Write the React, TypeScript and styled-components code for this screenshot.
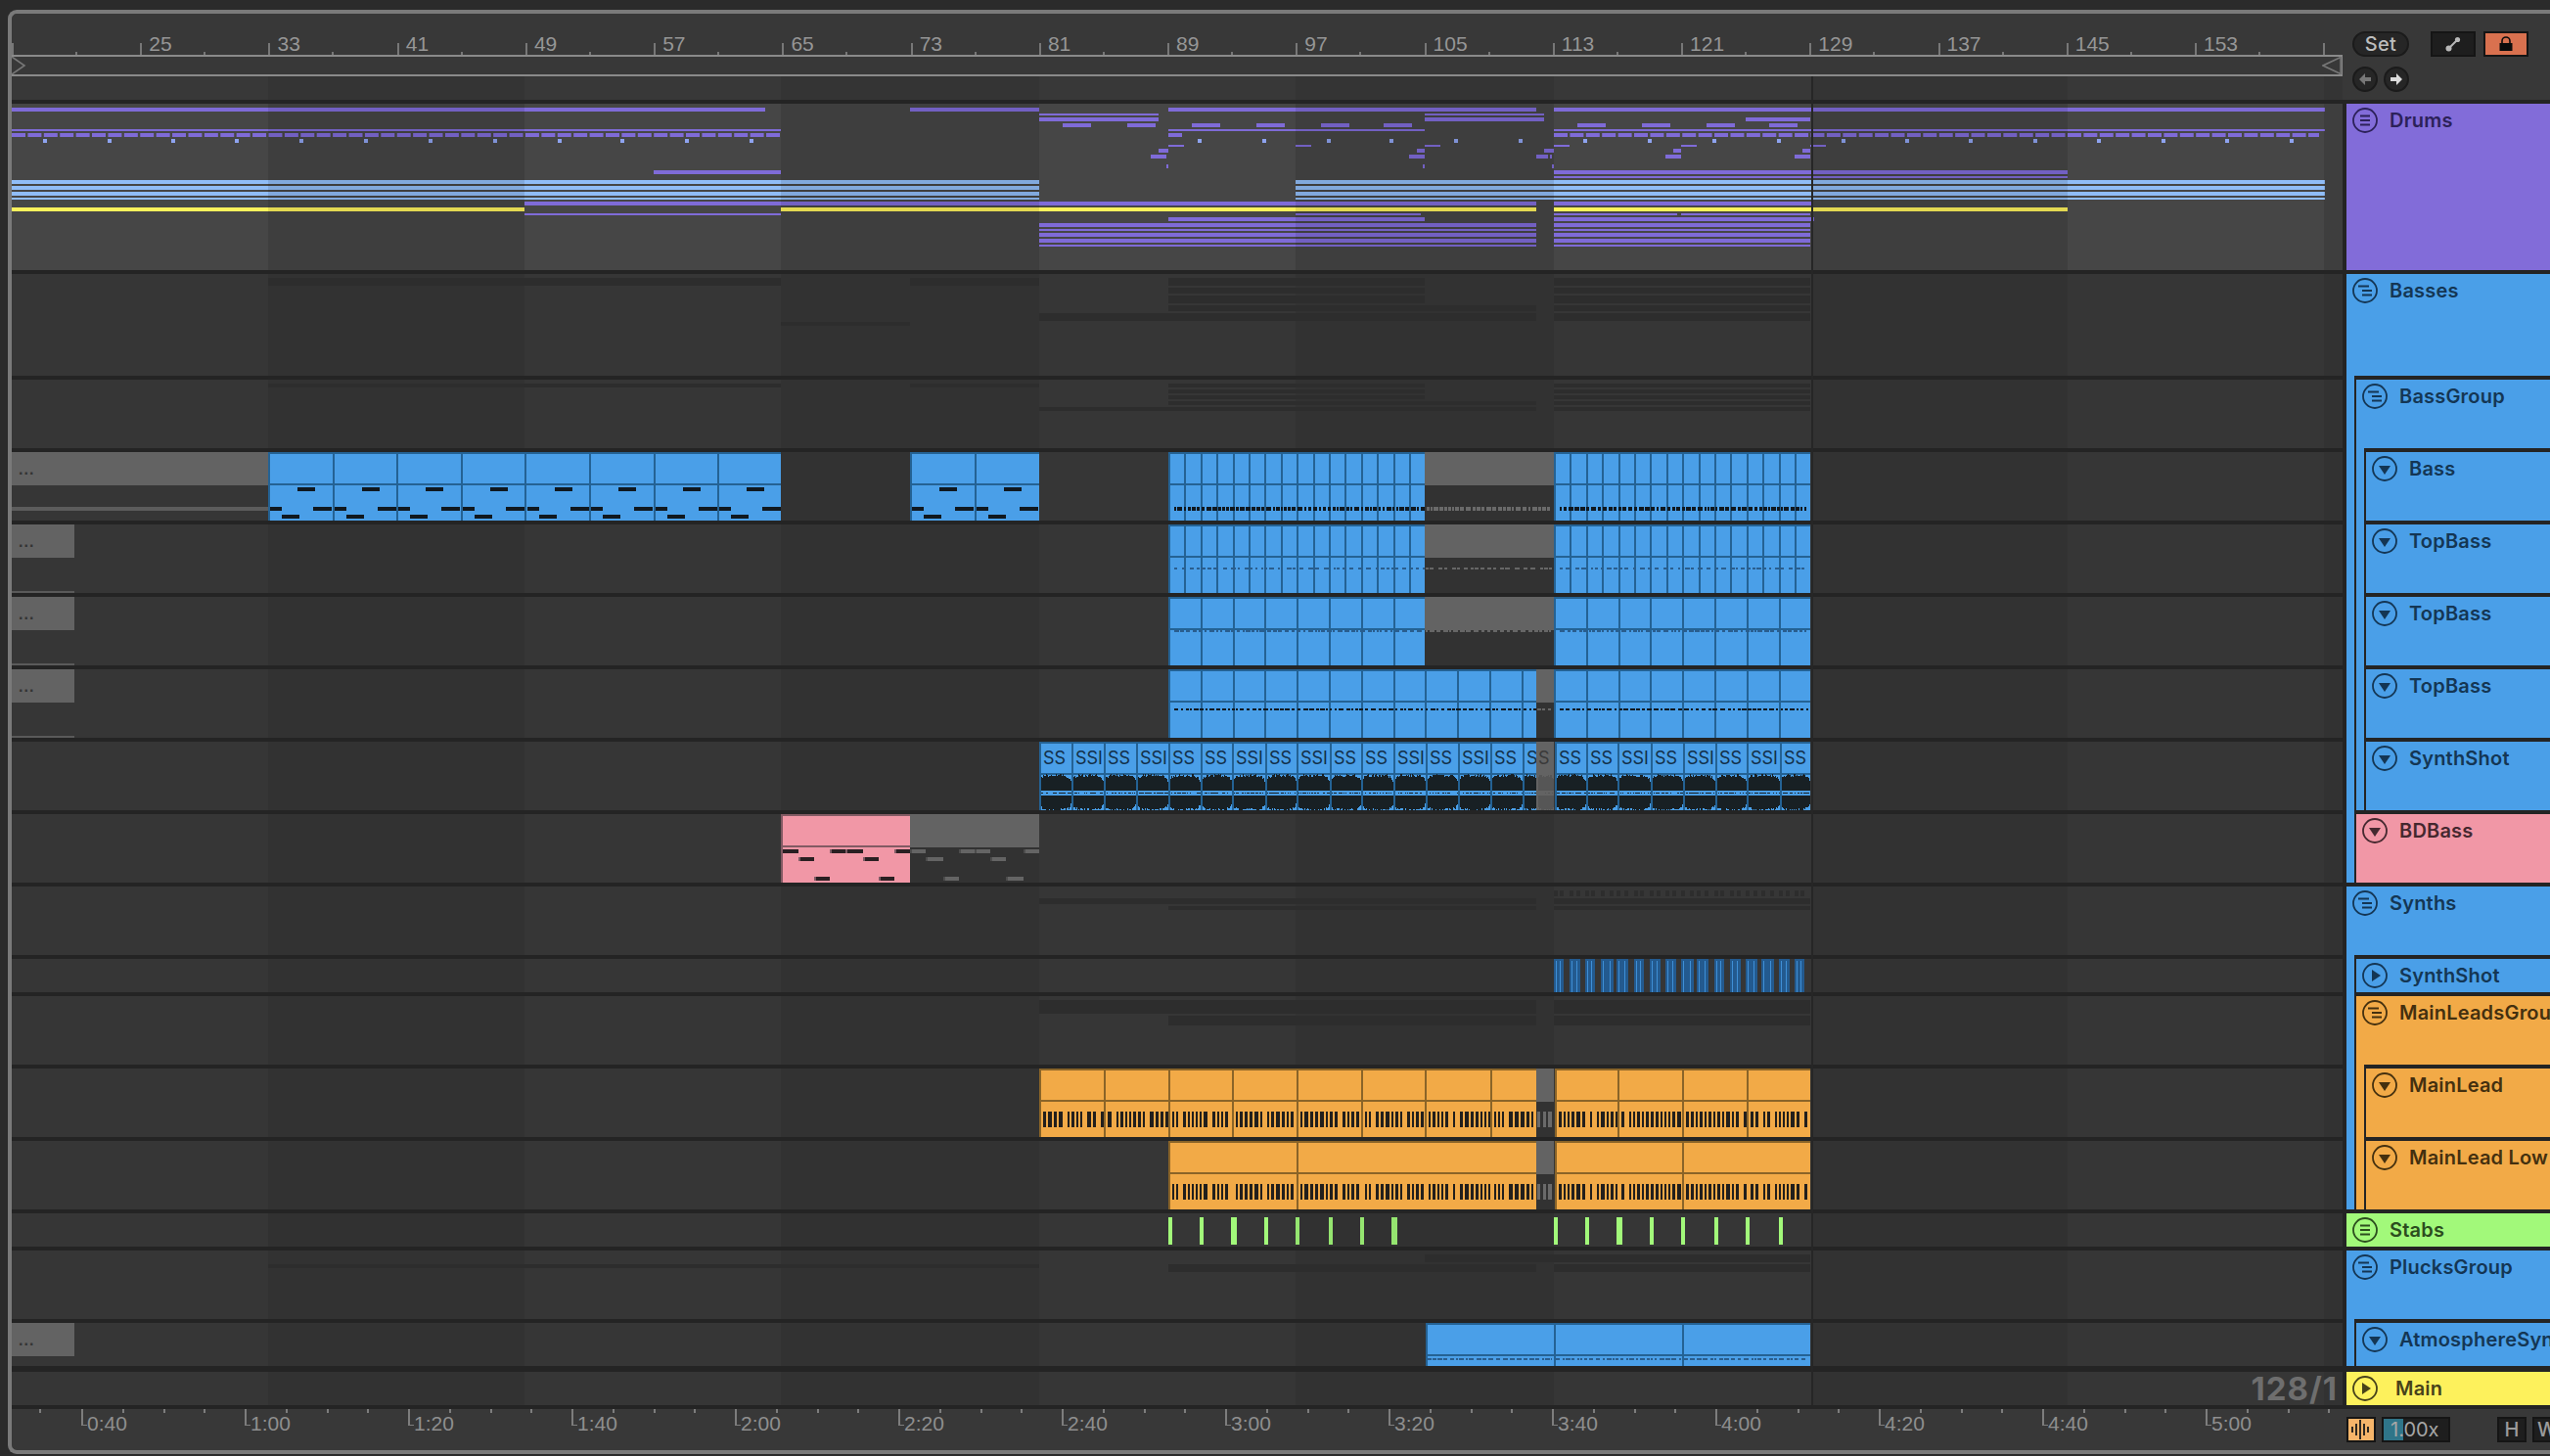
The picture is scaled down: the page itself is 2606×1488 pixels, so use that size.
import React from "react"
import { createGlobalStyle, styled } from "styled-components"

// page x where the lanes begin, and the dark/light 16 bar bands measured from there
const LANE_X = 12
const LANE_W = 2382
const BAND_EDGES = [0, 262, 524, 786, 1050, 1312, 1576, 1839, 2101, 2363, 2382]

const bands = (alpha: number) => {
  const stops: string[] = []
  for (let i = 0; i < BAND_EDGES.length - 1; i++) {
    const c = i % 2 ? `rgba(0,0,0,${alpha})` : "transparent"
    stops.push(`${c} ${BAND_EDGES[i]}px ${BAND_EDGES[i + 1]}px`)
  }
  return `linear-gradient(90deg, ${stops.join(", ")})`
}

const random = (seed: number) => {
  let x = seed * 7919 + 17
  return () => {
    x = (x * 16807) % 2147483647
    return x / 2147483647
  }
}

const span = (from: number, to: number, step: number) => {
  const out: number[] = []
  for (let x = from; x < to - 2; x += step) out.push(Math.round(x))
  out.push(to)
  return out
}

type Bar = [number, number, number, number] // x1, x2, y, height

const PURPLE = "#7f6bd8"
const SKY = "#90bdf7"
const DOT = "#8ea3ef"
const YELLOW = "#fdf15c"
const SHADOW = "#2d2d2d"
const NOTE = "#10181f"
const GREY_NOTE = "#646464"

const TONES = {
  blue: { bg: "#4a9fe8", line: "#246294", ink: "#143654" },
  purple: { bg: "#826cd9", line: "#4f3fa0", ink: "#2c2159" },
  pink: { bg: "#f197a6", line: "#825a63", ink: "#45282f" },
  orange: { bg: "#f2aa47", line: "#8a6428", ink: "#44300f" },
  green: { bg: "#a2f97a", line: "#4a8a3a", ink: "#2c4d1e" },
  yellow: { bg: "#fdf15c", line: "#8a8430", ink: "#47421a" },
} as const

type Tone = keyof typeof TONES

const GlobalStyle = createGlobalStyle`
  html, body {
    margin: 0;
    padding: 0;
    background: #2b2b2b;
    overflow: hidden;
  }
  * { box-sizing: border-box; }
`

const Frame = styled.div`
  margin: 10px 0 0 8px;
  width: 2598px;
  height: 1476px;
  position: relative;
  overflow: hidden;
  background: #383838;
  border: 4px solid #7a7a7a;
  border-right: none;
  border-radius: 9px 0 0 9px;
  font-family: Inter, "Liberation Sans", sans-serif;
`

const TopBar = styled.div`
  display: flex;
  height: 88px;
`

const TopTimeline = styled.div`
  width: ${LANE_W}px;
  display: flex;
  flex-direction: column;
`

const Ruler = styled.div`
  display: flex;
  height: 42px;
  overflow: hidden;
`

const BarCell = styled.div`
  flex: 0 0 131.24px;
  position: relative;
  padding: 19px 0 0 9px;
  color: #969696;
  font: 21px/24px "Liberation Sans", sans-serif;

  &::before {
    content: "";
    position: absolute;
    left: 0;
    bottom: 0;
    width: 2px;
    height: 12px;
    background: #777;
  }
  &::after {
    content: "";
    position: absolute;
    left: 65px;
    bottom: 0;
    width: 2px;
    height: 3px;
    background: #777;
  }
`

const LoopBar = styled.div`
  height: 22px;
  border-top: 2px solid #8a8a8a;
  border-bottom: 2px solid #8a8a8a;
  border-right: 1px solid #8a8a8a;
  display: flex;
  justify-content: space-between;
`

const LoopEnd = styled.svg`
  display: block;
  width: 20px;
  height: 18px;
`

const LoopPad = styled.div`
  flex: 1;
  background: ${bands(0.08)};
`

const Controls = styled.div`
  margin-left: 10px;
  padding-top: 18px;
  display: flex;
  flex-direction: column;
  gap: 10px;
`

const ControlRow = styled.div`
  display: flex;
  gap: 6px;
`

const SetButton = styled.div`
  width: 58px;
  height: 26px;
  margin-right: 16px;
  border-radius: 13px;
  background: #262626;
  border: 2px solid #1b1b1b;
  color: #bdbdbd;
  font-size: 20px;
  font-weight: 500;
  letter-spacing: 0.4px;
  display: flex;
  align-items: center;
  justify-content: center;
`

const SquareButton = styled.div<{ $active?: boolean }>`
  width: 46px;
  height: 26px;
  margin-right: 2px;
  background: ${(p) => (p.$active ? "#d9714f" : "#1e1e1e")};
  border: 2px solid #151515;
  display: flex;
  align-items: center;
  justify-content: center;
`

const RoundButton = styled.div`
  width: 26px;
  height: 26px;
  border-radius: 50%;
  background: #262626;
  border: 2px solid #1b1b1b;
  display: flex;
  align-items: center;
  justify-content: center;
`

const TrackRow = styled.div<{ $h: number; $sep: number }>`
  display: flex;
  height: ${(p) => p.$h + p.$sep}px;
`

// lanes whose art dims its own bands (notes dim with them) get a flat background
const LaneCell = styled.div<{ $sep: number; $group?: boolean; $flat?: boolean }>`
  flex: 0 0 ${LANE_W + 4}px;
  position: relative;
  border-top: ${(p) => p.$sep}px solid #242424;
  border-right: 4px solid #242424;
  background-color: ${(p) => (p.$group ? "#464646" : "#363636")};
  background-image: ${(p) => (p.$flat ? "none" : bands(0.08))};
`

const LaneArt = styled.svg`
  position: absolute;
  left: 0;
  top: 0;
  display: block;
`

const ClipBox = styled.div<{ $tone: Tone | "grey" | "greyFull" }>`
  position: absolute;
  top: 0;
  bottom: 0;
  display: flex;
  overflow: hidden;
  background: ${(p) =>
    p.$tone === "greyFull"
      ? "#636363"
      : p.$tone === "grey"
        ? "transparent"
        : TONES[p.$tone].bg};
  border-top: 2px solid
    ${(p) =>
      p.$tone === "grey" || p.$tone === "greyFull"
        ? "#636363"
        : TONES[p.$tone].line};
  --edge: ${(p) => (p.$tone === "grey" || p.$tone === "greyFull" ? "0" : "2px")};
  --line: ${(p) =>
    p.$tone === "grey" || p.$tone === "greyFull"
      ? "transparent"
      : TONES[p.$tone].line};
  --title: ${(p) => (p.$tone === "grey" ? "#636363" : "transparent")};
`

const Segment = styled.div`
  flex: none;
  height: 100%;
  border-left: var(--edge) solid var(--line);
`

const SegmentTitle = styled.div`
  height: 32px;
  padding-left: 2px;
  border-bottom: 2px solid var(--line);
  background: var(--title);
  overflow: hidden;
  white-space: nowrap;
  color: #12304a;
  font: 18px/30px Inter, sans-serif;
`

const MoreDots = styled.span`
  color: #333;
  font: 700 16px/30px "Liberation Sans", sans-serif;
  letter-spacing: 1px;
  padding-left: 5px;
`

const GreySegmentTitle = styled(SegmentTitle)`
  color: #3a3a3a;
`

const SampleRate = styled.div`
  position: absolute;
  right: 5px;
  top: 0;
  color: #6e6e6e;
  font: 700 33px/34px Inter, sans-serif;
  letter-spacing: 1px;
`

const Head = styled.div`
  flex: 1;
  display: flex;
  min-width: 0;
`

const Indent = styled.div<{ $tone: Tone }>`
  flex: 0 0 10px;
  background: ${(p) => TONES[p.$tone].bg};
  border-right: 2px solid #242424;
`

const HeadBody = styled.div<{ $tone: Tone; $sep: number }>`
  flex: 1;
  min-width: 0;
  display: flex;
  align-items: flex-start;
  gap: 12px;
  padding: 4px 0 0 6px;
  overflow: hidden;
  white-space: nowrap;
  background: ${(p) => TONES[p.$tone].bg};
  border-top: ${(p) => p.$sep}px solid #242424;
  color: ${(p) => TONES[p.$tone].ink};
`

const HeadName = styled.div<{ $shift?: boolean }>`
  padding-left: ${(p) => (p.$shift ? 6 : 0)}px;
  font-size: 20px;
  font-weight: 600;
  line-height: 26px;
  letter-spacing: 0.2px;
`

const SongEnd = styled.div`
  position: absolute;
  left: 1839px;
  top: 64px;
  width: 2px;
  height: 1358px;
  background: #262626;
`

const TimeRow = styled.div`
  display: flex;
  height: 46px;
  border-top: 4px solid #242424;
`

const TimeRuler = styled.div`
  flex: 0 0 ${LANE_W}px;
  display: flex;
  overflow: hidden;
`

const tickImage = "linear-gradient(#7d7d7d, #7d7d7d)"

const TimeCell = styled.div<{ $first?: boolean }>`
  flex: 0 0 ${(p) => (p.$first ? 71 : 167)}px;
  position: relative;
  padding: 3px 0 0 6px;
  color: #8f8f8f;
  font: 21px/24px "Liberation Sans", sans-serif;
  background-image: ${(p) =>
    p.$first ? tickImage : `${tickImage}, ${tickImage}, ${tickImage}`};
  background-repeat: no-repeat;
  background-size: 2px 4px;
  background-position: ${(p) =>
    p.$first ? "28px 0" : "42px 0, 84px 0, 125px 0"};

  &::before {
    content: ${(p) => (p.$first ? "none" : '""')};
    position: absolute;
    left: 0;
    top: 0;
    width: 4px;
    height: 16px;
    border-left: 2px solid #7d7d7d;
    border-bottom: 1px solid #7d7d7d;
  }
`

const TimeTools = styled.div`
  margin-left: 4px;
  padding-top: 8px;
  display: flex;
  align-items: flex-start;
  gap: 6px;
`

const ToolBox = styled.div`
  flex: none;
  height: 26px;
  width: 30px;
  background: #1e1e1e;
  border: 2px solid #151515;
  color: #9b9b9b;
  font-size: 20px;
  font-weight: 500;
  display: flex;
  align-items: center;
  justify-content: center;
  overflow: hidden;
`

const WaveButton = styled(ToolBox)`
  background: #f6b56a;
`

const TempoBox = styled(ToolBox)`
  width: 70px;
  margin-right: 42px;
  justify-content: flex-start;
  padding-left: 7px;
  background: linear-gradient(90deg, #2f7589 20px, #1e1e1e 20px);
  color: #a6a6a6;
  font-weight: 400;
`

function Clip({
  tone,
  edges,
  labels,
  more,
}: {
  tone: Tone | "grey" | "greyFull"
  edges: number[]
  labels?: string[]
  more?: boolean
}) {
  const Title = tone === "grey" || tone === "greyFull" ? GreySegmentTitle : SegmentTitle
  return (
    <ClipBox
      $tone={tone}
      style={{ left: edges[0] - LANE_X, width: edges[edges.length - 1] - edges[0] }}
    >
      {edges.slice(0, -1).map((x, i) => (
        <Segment key={x} style={{ width: edges[i + 1] - x }}>
          <Title>
            {more ? <MoreDots>...</MoreDots> : labels?.[i]}
          </Title>
        </Segment>
      ))}
    </ClipBox>
  )
}

// one svg per lane, drawn in page coordinates
function Art({
  top,
  h,
  dim,
  children,
}: {
  top: number
  h: number
  dim?: number
  children: React.ReactNode
}) {
  return (
    <LaneArt width={LANE_W} height={h} viewBox={`${LANE_X} ${top} ${LANE_W} ${h}`}>
      {children}
      {dim
        ? BAND_EDGES.slice(0, -1).map((x, i) =>
            i % 2 ? (
              <rect
                key={x}
                x={x + LANE_X}
                y={top}
                width={BAND_EDGES[i + 1] - x}
                height={h}
                fill={`rgba(0,0,0,${dim})`}
              />
            ) : null
          )
        : null}
    </LaneArt>
  )
}

function Bars({ color, list }: { color: string; list: Bar[] }) {
  return (
    <path
      fill={color}
      d={list.map(([a, b, y, h]) => `M${a} ${y}H${b}V${y + h}H${a}Z`).join("")}
    />
  )
}

const twin = (y: number, h: number, a1: number, a2: number, b1: number, b2: number): Bar[] => [
  [a1, a2, y, h],
  [b1, b2, y, h],
]

const dashes = (from: number, to: number, y: number, h: number, seed: number, sparse = 0): Bar[] => {
  const r = random(seed)
  const out: Bar[] = []
  let x = from
  while (x < to) {
    const w = 2 + Math.floor(r() * 4)
    out.push([x, Math.min(x + w, to), y, h])
    x += w + 1 + Math.floor(r() * (2 + sparse))
  }
  return out
}

const barcode = (from: number, to: number, y: number, h: number, seed: number): Bar[] => {
  const r = random(seed)
  const out: Bar[] = []
  let x = from + 4
  while (x < to - 1) {
    const w = 2 + Math.floor(r() * 2.4)
    const gap = r() > 0.8 ? 5 : 2
    out.push([x, Math.min(x + w, to), y, h])
    x += w + gap
  }
  return out
}

function Waveform({ from, to, color }: { from: number; to: number; color: string }) {
  const r = random(from)
  const c = 810
  let d = ""
  for (let x = from + 2; x < to; x++) {
    const f = (x - from) / (to - from)
    const env = Math.min(1, Math.pow(Math.sin(Math.PI * Math.min(f * 1.02, 0.99)), 0.16) * 1.08)
    const up = Math.round(env * (14 + r() * 3))
    const down = Math.round(env * (13 + r() * 3))
    d += `M${x} ${c - 2 - up}h1v${up}h-1z`
    d += `M${x} ${c + 3}h1v${down}h-1z`
    if (r() > 0.45) d += `M${x} ${c}h1v1h-1z`
  }
  return <path d={d} fill={color} />
}

const DRUM_DOTS: Bar[] = [
  44, 110, 175, 240, 306, 372, 438, 504, 570, 634, 700, 766, 1224, 1290, 1356, 1420, 1486, 1552,
  1618, 1684, 1750, 1816, 1882, 1947, 2012, 2078, 2143, 2209, 2274, 2340,
].map((x) => [x, x + 4, 142, 4] as Bar)

const barDashes = (from: number, to: number): Bar[] => {
  const out: Bar[] = []
  for (let x = from; x < to - 2; x += 16.405) out.push([x, Math.min(x + 14, to), 136, 4])
  return out
}

function DrumsArt() {
  const blocks = [1086, 1152, 1218, 1284, 1350, 1414, 1612, 1678, 1744, 1808]
  const purple: Bar[] = [
    [12, 782, 110, 4],
    [930, 1062, 110, 4],
    [1194, 1570, 110, 4],
    [1588, 2376, 110, 4],
    ...twin(116, 2, 1062, 1184, 1456, 1578),
    ...twin(120, 4, 1062, 1184, 1456, 1578),
    [1784, 1850, 120, 4],
    ...blocks.map((x) => [x, x + 29, 126, 4] as Bar),
    [12, 798, 132, 2],
    [1194, 1456, 132, 2],
    [1588, 2376, 132, 2],
    ...barDashes(12, 798),
    ...barDashes(1194, 1208),
    ...barDashes(1588, 2370),
    ...[1194, 1324, 1456, 1588, 1718, 1850].map((x) => [x, x + 16, 148, 2] as Bar),
    ...[1184, 1448, 1578, 1710, 1842].map((x) => [x, x + (x === 1184 || x === 1578 ? 10 : 8), 152, 4] as Bar),
    ...[1176, 1440, 1702, 1834].map((x) => [x, x + 16, 158, 4] as Bar),
    [1570, 1582, 158, 4],
    [1584, 1586, 158, 4],
    [1192, 1194, 168, 4],
    [1454, 1456, 168, 4],
    [1586, 1588, 168, 4],
    [668, 798, 174, 4],
    [1588, 2113, 174, 4],
    [1588, 2113, 180, 2],
    [536, 1570, 206, 4],
    [1588, 1851, 206, 4],
    [536, 798, 218, 2],
    [1324, 1452, 218, 2],
    [1588, 1714, 218, 2],
    [1718, 1850, 218, 2],
    ...twin(222, 4, 1194, 1456, 1588, 1854),
    ...twin(228, 4, 1062, 1570, 1588, 1850),
    ...twin(234, 2, 1062, 1570, 1588, 1850),
    ...twin(238, 4, 1062, 1570, 1588, 1850),
    ...twin(244, 4, 1062, 1570, 1588, 1850),
    ...twin(250, 2, 1062, 1570, 1588, 1850),
  ]
  const sky: Bar[] = [184, 190, 196].flatMap((y) => twin(y, 4, 12, 1062, 1324, 2376))
  sky.push(...twin(202, 2, 12, 1062, 1324, 2376))
  const yellow: Bar[] = [
    [12, 536, 212, 4],
    [798, 1570, 212, 4],
    [1588, 2113, 212, 4],
  ]
  return (
    <Art top={106} h={170} dim={0.1}>
      <Bars color={SKY} list={sky} />
      <Bars color={YELLOW} list={yellow} />
      <Bars color={PURPLE} list={purple} />
      <Bars color={DOT} list={DRUM_DOTS} />
    </Art>
  )
}

const shadowTriple = (ys: [number, number][], longFrom: number): Bar[] =>
  ys.flatMap(([y, h], i) => twin(y, h, i === ys.length - 1 ? longFrom : 1194, i >= ys.length - 2 ? 1570 : 1456, 1588, 1850))

function BassesArt() {
  const list: Bar[] = [
    [274, 798, 284, 8],
    [930, 1062, 284, 8],
    [798, 930, 329, 4],
    ...shadowTriple(
      [
        [284, 8],
        [294, 6],
        [302, 8],
        [312, 6],
        [320, 8],
      ],
      1062
    ),
  ]
  return (
    <Art top={280} h={104}>
      <Bars color={SHADOW} list={list} />
    </Art>
  )
}

function BassGroupArt() {
  const list: Bar[] = [
    [274, 798, 392, 4],
    [930, 1062, 392, 4],
    ...shadowTriple(
      [
        [392, 4],
        [398, 4],
        [404, 4],
        [410, 4],
        [416, 4],
      ],
      1062
    ),
  ]
  return (
    <Art top={388} h={70}>
      <Bars color={SHADOW} list={list} />
    </Art>
  )
}

function BassArt() {
  const starts = [274, 340, 405, 471, 537, 602, 668, 733, 930, 996]
  const notes: Bar[] = starts.flatMap((s) => [
    [s + 30, s + 48, 498, 4],
    [s + 2, s + 14, 518, 4],
    [s + 46, s + 65, 518, 4],
    [s + 14, s + 32, 526, 4],
  ] as Bar[])
  return (
    <Art top={462} h={70}>
      <Bars color="#5c5c5c" list={[[12, 274, 518, 4]]} />
      <Bars color={NOTE} list={[...notes, ...dashes(1200, 1456, 518, 4, 3), ...dashes(1594, 1848, 518, 4, 4)]} />
      <Bars color="#6a6a6a" list={dashes(1458, 1586, 518, 4, 5)} />
    </Art>
  )
}

function TopBassArt({
  top,
  y,
  seed,
  noteColor,
  greyEnd,
  sparse,
}: {
  top: number
  y: number
  seed: number
  noteColor: string
  greyEnd: number
  sparse: number
}) {
  return (
    <Art top={top} h={70}>
      <Bars color="#5a5a5a" list={[[12, 76, top + 68, 2]]} />
      <Bars
        color={noteColor}
        list={[...dashes(1200, greyEnd, y, 2, seed, sparse), ...dashes(1594, 1848, y, 2, seed + 1, sparse)]}
      />
      <Bars color="#666" list={dashes(greyEnd + 1, 1586, y, 2, seed + 2, sparse)} />
    </Art>
  )
}

const WAVE_LEFT = [1062, 1095, 1128, 1161, 1194, 1227, 1259, 1293, 1325, 1359, 1391, 1424, 1457, 1490, 1523, 1556, 1570]
const WAVE_RIGHT = [1589, 1621, 1653, 1687, 1720, 1753, 1785, 1819, 1850]

function WaveArt() {
  return (
    <Art top={758} h={70}>
      {WAVE_LEFT.slice(0, -1).map((x, i) => (
        <Waveform key={x} from={x} to={WAVE_LEFT[i + 1]} color="#182024" />
      ))}
      <Waveform from={1570} to={1588} color="#565656" />
      {WAVE_RIGHT.slice(0, -1).map((x, i) => (
        <Waveform key={x} from={x} to={WAVE_RIGHT[i + 1]} color="#182024" />
      ))}
    </Art>
  )
}

function PinkArt() {
  const pink: Bar[] = [
    [800, 816, 868, 4],
    [850, 864, 868, 4],
    [866, 882, 868, 4],
    [916, 930, 868, 4],
    [818, 832, 876, 4],
    [884, 898, 876, 4],
    [834, 848, 896, 4],
    [900, 914, 896, 4],
  ]
  const grey: Bar[] = [
    [932, 946, 868, 4],
    [982, 996, 868, 4],
    [998, 1012, 868, 4],
    [1048, 1062, 868, 4],
    [948, 964, 876, 4],
    [1014, 1028, 876, 4],
    [966, 980, 896, 4],
    [1030, 1046, 896, 4],
  ]
  const shade = (list: Bar[]): Bar[] => list.map(([a, , y, h]) => [a - 2, a, y, h])
  return (
    <Art top={832} h={70}>
      <Bars color="#7e5a64" list={shade(pink.slice(1))} />
      <Bars color="#2a1f22" list={pink} />
      <Bars color="#4c4c4c" list={shade(grey)} />
      <Bars color={GREY_NOTE} list={grey} />
    </Art>
  )
}

const SHOTS = [
  [1588, 1598], [1604, 1615], [1620, 1630], [1636, 1649],
  [1652, 1664], [1670, 1680], [1686, 1697], [1702, 1713],
  [1718, 1731], [1734, 1746], [1752, 1762], [1768, 1779],
  [1784, 1796], [1800, 1813], [1818, 1829], [1834, 1844],
]

function SynthsArt() {
  const list: Bar[] = [
    ...twin(918, 6, 1062, 1570, 1588, 1850),
    ...twin(926, 4, 1194, 1570, 1588, 1850),
    ...SHOTS.flatMap(([a, b]) => [
      [a, a + 4, 910, 6],
      [b - 4, b, 910, 6],
    ] as Bar[]),
  ]
  return (
    <Art top={906} h={70}>
      <Bars color={SHADOW} list={list} />
    </Art>
  )
}

function ShotArt() {
  const dark: Bar[] = SHOTS.map(([a, b]) => [a, b, 980, 34])
  const light: Bar[] = SHOTS.flatMap(([a, b]) => [
    [a + 2, a + 3, 982, 32],
    [b - 4, b - 3, 982, 32],
  ] as Bar[])
  return (
    <Art top={980} h={34}>
      <Bars color="#235a8f" list={dark} />
      <Bars color="#3f8fd6" list={light} />
    </Art>
  )
}

function MainGroupArt() {
  return (
    <Art top={1018} h={70}>
      <Bars
        color={SHADOW}
        list={[...twin(1022, 14, 1062, 1570, 1588, 1850), ...twin(1038, 10, 1194, 1570, 1588, 1850)]}
      />
    </Art>
  )
}

const LEAD_EDGES = [1062, 1128, 1194, 1259, 1325, 1391, 1456, 1523, 1570]
const LEAD_RIGHT = [1589, 1653, 1719, 1785, 1850]

function LeadArt({ y, edges, top }: { y: number; edges: number[]; top: number }) {
  const left = edges.slice(0, -1).flatMap((x, i) => barcode(x, edges[i + 1], y, 16, x))
  const right = LEAD_RIGHT.slice(0, -1).flatMap((x, i) => barcode(x, LEAD_RIGHT[i + 1], y, 16, x + 3))
  return (
    <Art top={top} h={70}>
      <Bars color="#221f1c" list={[...left, ...right]} />
      <Bars color="#6a6a6a" list={[[1571, 1574, y, 16], [1577, 1580, y, 16], [1582, 1586, y, 16]]} />
    </Art>
  )
}

function StabsArt() {
  const list: Bar[] = [
    [1194, 4], [1226, 4], [1258, 6], [1292, 4], [1324, 4], [1358, 4], [1390, 4], [1422, 6],
    [1588, 4], [1620, 4], [1652, 6], [1686, 4], [1718, 4], [1752, 4], [1784, 4], [1818, 4],
  ].map(([x, w]) => [x, x + w, 1244, 28] as Bar)
  return (
    <Art top={1240} h={34} dim={0.08}>
      <Bars color="#a2f97a" list={list} />
    </Art>
  )
}

function PlucksArt() {
  return (
    <Art top={1278} h={70}>
      <Bars
        color={SHADOW}
        list={[
          [1456, 1850, 1282, 8],
          [274, 1062, 1292, 4],
          ...twin(1292, 8, 1194, 1570, 1588, 1850),
        ]}
      />
    </Art>
  )
}

function AtmosphereArt() {
  return (
    <Art top={1352} h={44}>
      <Bars
        color="#2a5e8f"
        list={[
          ...dashes(1459, 1586, 1388, 2, 9, 1),
          ...dashes(1590, 1718, 1388, 2, 10, 1),
          ...dashes(1721, 1848, 1388, 2, 11, 1),
        ]}
      />
    </Art>
  )
}

function TrackIcon({ kind }: { kind: "menu" | "fold" | "down" | "play" }) {
  return (
    <svg width="26" height="26" viewBox="0 0 26 26" style={{ flex: "none", display: "block" }}>
      <circle cx="13" cy="13" r="12" fill="none" stroke="currentColor" strokeWidth="1.8" />
      {kind === "menu" && (
        <path d="M8 8.5h10M8 13h10M8 17.5h10" stroke="currentColor" strokeWidth="2" />
      )}
      {kind === "fold" && (
        <path d="M6 8.5h11M10 13h10M10 17.5h10" stroke="currentColor" strokeWidth="2" />
      )}
      {kind === "down" && <path d="M7 10h12l-6 9z" fill="currentColor" />}
      {kind === "play" && <path d="M10 7v12l9-6z" fill="currentColor" />}
    </svg>
  )
}

const BAR_LABELS = ["", "25", "33", "41", "49", "57", "65", "73", "81", "89", "97", "105", "113", "121", "129", "137", "145", "153", ""]
const TIME_LABELS = ["0:40", "1:00", "1:20", "1:40", "2:00", "2:20", "2:40", "3:00", "3:20", "3:40", "4:00", "4:20", "4:40", "5:00"]

const SS = ["SS", "SSI", "SS", "SSI", "SS", "SS", "SSI", "SS", "SSI", "SS", "SS", "SSI", "SS", "SSI", "SS", "S"]
const SS_RIGHT = ["SS", "SS", "SSI", "SS", "SSI", "SS", "SSI", "SS"]

const oneBar = (a: number, b: number) => span(a, b, 16.405)
const twoBar = (a: number, b: number) => span(a, b, 32.81)

type Row = {
  name: string
  tone: Tone
  indents?: Tone[]
  icon: "menu" | "fold" | "down" | "play"
  top: number
  h: number
  sep?: number
  group?: boolean
  flat?: boolean
  shift?: boolean
  lane?: React.ReactNode
}

const BASS_LEFT_GREY = <Clip tone="grey" more edges={[12, 76]} />

const ROWS: Row[] = [
  { name: "Drums", tone: "purple", icon: "menu", top: 106, h: 170, group: true, flat: true, lane: <DrumsArt /> },
  { name: "Basses", tone: "blue", icon: "fold", top: 280, h: 104, lane: <BassesArt /> },
  { name: "BassGroup", tone: "blue", indents: ["blue"], icon: "fold", top: 388, h: 70, lane: <BassGroupArt /> },
  {
    name: "Bass", tone: "blue", indents: ["blue", "blue"], icon: "down", top: 462, h: 70,
    lane: (
      <>
        <Clip tone="grey" more edges={[12, 274]} />
        <Clip tone="blue" edges={span(274, 798, 65.6)} />
        <Clip tone="blue" edges={span(930, 1062, 65.6)} />
        <Clip tone="blue" edges={oneBar(1194, 1456)} />
        <Clip tone="grey" edges={[1456, 1588]} />
        <Clip tone="blue" edges={oneBar(1588, 1850)} />
        <BassArt />
      </>
    ),
  },
  {
    name: "TopBass", tone: "blue", indents: ["blue", "blue"], icon: "down", top: 536, h: 70,
    lane: (
      <>
        {BASS_LEFT_GREY}
        <Clip tone="blue" edges={oneBar(1194, 1456)} />
        <Clip tone="grey" edges={[1456, 1588]} />
        <Clip tone="blue" edges={oneBar(1588, 1850)} />
        <TopBassArt top={536} y={580} seed={21} noteColor="#2a5e8f" greyEnd={1456} sparse={3} />
      </>
    ),
  },
  {
    name: "TopBass", tone: "blue", indents: ["blue", "blue"], icon: "down", top: 610, h: 70,
    lane: (
      <>
        {BASS_LEFT_GREY}
        <Clip tone="blue" edges={twoBar(1194, 1456)} />
        <Clip tone="grey" edges={[1456, 1588]} />
        <Clip tone="blue" edges={twoBar(1588, 1850)} />
        <TopBassArt top={610} y={644} seed={31} noteColor="#2a5e8f" greyEnd={1456} sparse={1} />
      </>
    ),
  },
  {
    name: "TopBass", tone: "blue", indents: ["blue", "blue"], icon: "down", top: 684, h: 70,
    lane: (
      <>
        {BASS_LEFT_GREY}
        <Clip tone="blue" edges={twoBar(1194, 1570)} />
        <Clip tone="grey" edges={[1570, 1588]} />
        <Clip tone="blue" edges={twoBar(1588, 1850)} />
        <TopBassArt top={684} y={724} seed={41} noteColor={NOTE} greyEnd={1570} sparse={1} />
      </>
    ),
  },
  {
    name: "SynthShot", tone: "blue", indents: ["blue", "blue"], icon: "down", top: 758, h: 70,
    lane: (
      <>
        <Clip tone="blue" edges={WAVE_LEFT} labels={SS} />
        <Clip tone="greyFull" edges={[1570, 1588]} labels={["S"]} />
        <Clip tone="blue" edges={WAVE_RIGHT} labels={SS_RIGHT} />
        <WaveArt />
      </>
    ),
  },
  {
    name: "BDBass", tone: "pink", indents: ["blue"], icon: "down", top: 832, h: 70,
    lane: (
      <>
        <Clip tone="pink" edges={[798, 930]} />
        <Clip tone="grey" edges={[930, 1062]} />
        <PinkArt />
      </>
    ),
  },
  { name: "Synths", tone: "blue", icon: "fold", top: 906, h: 70, lane: <SynthsArt /> },
  { name: "SynthShot", tone: "blue", indents: ["blue"], icon: "play", top: 980, h: 34, lane: <ShotArt /> },
  { name: "MainLeadsGroup", tone: "orange", indents: ["blue"], icon: "fold", top: 1018, h: 70, lane: <MainGroupArt /> },
  {
    name: "MainLead", tone: "orange", indents: ["blue", "orange"], icon: "down", top: 1092, h: 70,
    lane: (
      <>
        <Clip tone="orange" edges={LEAD_EDGES} />
        <Clip tone="grey" edges={[1570, 1588]} />
        <Clip tone="orange" edges={LEAD_RIGHT} />
        <LeadArt top={1092} y={1136} edges={LEAD_EDGES} />
      </>
    ),
  },
  {
    name: "MainLead Low", tone: "orange", indents: ["blue", "orange"], icon: "down", top: 1166, h: 70,
    lane: (
      <>
        <Clip tone="orange" edges={[1194, 1325, 1570]} />
        <Clip tone="grey" edges={[1570, 1588]} />
        <Clip tone="orange" edges={[1589, 1719, 1850]} />
        <LeadArt top={1166} y={1210} edges={[1194, 1259, 1325, 1391, 1456, 1523, 1570]} />
      </>
    ),
  },
  { name: "Stabs", tone: "green", icon: "menu", top: 1240, h: 34, flat: true, lane: <StabsArt /> },
  { name: "PlucksGroup", tone: "blue", icon: "fold", top: 1278, h: 70, lane: <PlucksArt /> },
  {
    name: "AtmosphereSynth", tone: "blue", indents: ["blue"], icon: "down", top: 1352, h: 44,
    lane: (
      <>
        {BASS_LEFT_GREY}
        <Clip tone="blue" edges={[1457, 1588, 1719, 1850]} />
        <AtmosphereArt />
      </>
    ),
  },
  {
    name: "Main", tone: "yellow", icon: "play", top: 1402, h: 34, sep: 6, shift: true,
    lane: <SampleRate>128/1</SampleRate>,
  },
]

export default function App() {
  return (
    <>
      <GlobalStyle />
      <Frame>
        <TopBar>
          <TopTimeline>
            <Ruler>
              {BAR_LABELS.map((label, i) => (
                <BarCell key={i}>{label}</BarCell>
              ))}
            </Ruler>
            <LoopBar>
              <LoopEnd viewBox="0 0 20 18">
                <path d="M0 0l13 9L0 18" fill="none" stroke="#777" strokeWidth="1.6" />
              </LoopEnd>
              <LoopEnd viewBox="0 0 20 18">
                <path d="M19 .5L1 9l18 8.5z" fill="none" stroke="#777" strokeWidth="1.6" />
              </LoopEnd>
            </LoopBar>
            <LoopPad />
          </TopTimeline>
          <Controls>
            <ControlRow>
              <SetButton>Set</SetButton>
              <SquareButton>
                <svg width="16" height="16" viewBox="0 0 16 16">
                  <path d="M4 12L12 4" stroke="#b8b8b8" strokeWidth="2" />
                  <circle cx="3.5" cy="12.5" r="3" fill="#b8b8b8" />
                  <circle cx="12.5" cy="3.5" r="2.6" fill="#b8b8b8" />
                </svg>
              </SquareButton>
              <SquareButton $active>
                <svg width="16" height="16" viewBox="0 0 16 16">
                  <path d="M4 7V5a4 4 0 0 1 8 0v2" fill="none" stroke="#0c0c0c" strokeWidth="1.6" />
                  <rect x="1.5" y="7" width="13" height="8" fill="#0c0c0c" />
                </svg>
              </SquareButton>
            </ControlRow>
            <ControlRow>
              <RoundButton>
                <svg width="14" height="14" viewBox="0 0 14 14">
                  <path d="M7 1L1 7l6 6V9h6V5H7z" fill="#777" />
                </svg>
              </RoundButton>
              <RoundButton>
                <svg width="14" height="14" viewBox="0 0 14 14">
                  <path d="M7 1l6 6-6 6V9H1V5h6z" fill="#dcdcdc" />
                </svg>
              </RoundButton>
            </ControlRow>
          </Controls>
        </TopBar>

        {ROWS.map((row) => {
          const sep = row.sep ?? 4
          return (
            <TrackRow key={row.top} $h={row.h} $sep={sep}>
              <LaneCell $sep={sep} $group={row.group} $flat={row.flat}>
                {row.lane}
              </LaneCell>
              <Head>
                {row.indents?.map((tone, i) => <Indent key={i} $tone={tone} />)}
                <HeadBody $tone={row.tone} $sep={sep}>
                  <TrackIcon kind={row.icon} />
                  <HeadName $shift={row.shift}>{row.name}</HeadName>
                </HeadBody>
              </Head>
            </TrackRow>
          )
        })}

        <TimeRow>
          <TimeRuler>
            <TimeCell $first />
            {TIME_LABELS.map((label) => (
              <TimeCell key={label}>{label}</TimeCell>
            ))}
            <TimeCell />
          </TimeRuler>
          <TimeTools>
            <WaveButton>
              <svg width="22" height="22" viewBox="0 0 22 22">
                <path
                  d="M2 8v6M6 5v12M10 1v20M14 5v12M18 8v6"
                  stroke="#1a1a1a"
                  strokeWidth="1.8"
                />
              </svg>
            </WaveButton>
            <TempoBox>1.00x</TempoBox>
            <ToolBox>H</ToolBox>
            <ToolBox>W</ToolBox>
          </TimeTools>
        </TimeRow>

        <SongEnd />
      </Frame>
    </>
  )
}
